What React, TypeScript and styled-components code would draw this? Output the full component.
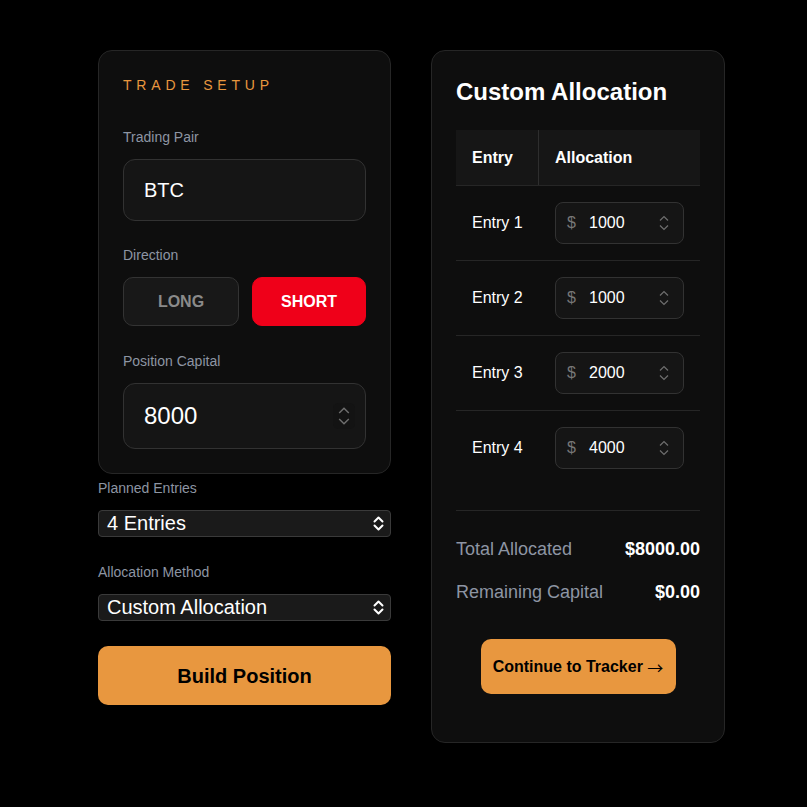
import React from 'react';
import styled, { createGlobalStyle } from 'styled-components';

const GlobalStyle = createGlobalStyle`
  body {
    margin: 0;
    background: #000;
    font-family: "Liberation Sans", Arial, sans-serif;
  }
`;

const ORANGE = '#e8973f';
const LABEL = '#8d95a3';

const Page = styled.div`
  display: flex;
  align-items: flex-start;
  gap: 40px;
  padding: 50px 0 0 98px;
`;

const LeftColumn = styled.div`
  width: 293px;
  display: flex;
  flex-direction: column;
`;

const Card = styled.div`
  background: #0e0e0e;
  border: 1px solid #262626;
  border-radius: 14px;
  padding: 24px;
`;

const RightCard = styled(Card)`
  width: 294px;
  box-sizing: border-box;
  display: flex;
  flex-direction: column;
  padding: 27px 24px 48px;
`;

const SectionTitle = styled.div`
  color: ${ORANGE};
  font-size: 14px;
  line-height: 20px;
  letter-spacing: 4.8px;
`;

const Label = styled.div<{ $mt: number }>`
  margin-top: ${(p) => p.$mt}px;
  margin-bottom: 14px;
  color: ${LABEL};
  font-size: 14px;
  line-height: 16px;
`;

const TextBox = styled.div<{ $h: number; $size: number }>`
  height: ${(p) => p.$h}px;
  box-sizing: border-box;
  display: flex;
  align-items: center;
  justify-content: space-between;
  padding: 0 20px;
  background: #151515;
  border: 1px solid #323232;
  border-radius: 12px;
  color: #fff;
  font-size: ${(p) => p.$size}px;
`;

const DirectionRow = styled.div`
  display: grid;
  grid-template-columns: 116px 114px;
  gap: 13px;
`;

const DirButton = styled.div<{ $active?: boolean }>`
  height: 49px;
  box-sizing: border-box;
  display: flex;
  align-items: center;
  justify-content: center;
  border-radius: 10px;
  font-size: 16px;
  font-weight: 700;
  background: ${(p) => (p.$active ? '#ef0019' : '#181818')};
  border: 1px solid ${(p) => (p.$active ? '#ef0019' : '#333')};
  color: ${(p) => (p.$active ? '#fff' : '#8a8a8a')};
`;

const SpinBox = styled.div`
  width: 22px;
  height: 26px;
  border-radius: 5px;
  background: #131313;
  display: flex;
  align-items: center;
  justify-content: center;
  margin-right: -10px;
`;

const Select = styled.div`
  height: 27px;
  box-sizing: border-box;
  display: flex;
  align-items: center;
  justify-content: space-between;
  padding: 0 6px 0 8px;
  background: #1a1a1a;
  border: 1px solid #3a3a3a;
  border-radius: 4px;
  color: #fff;
  font-size: 20px;
`;

const PrimaryButton = styled.div<{ $mt: number }>`
  margin-top: ${(p) => p.$mt}px;
  display: flex;
  align-items: center;
  justify-content: center;
  background: ${ORANGE};
  border-radius: 10px;
  color: #000;
  font-weight: 700;
`;

const BuildButton = styled(PrimaryButton)`
  height: 59px;
  font-size: 20px;
  padding-top: 2px;
  box-sizing: border-box;
`;

const ContinueButton = styled(PrimaryButton)`
  align-self: center;
  width: 195px;
  height: 55px;
  font-size: 16px;
  white-space: pre;
`;

const Arrow = styled.span`
  font-family: "Noto Sans CJK SC", sans-serif;
  font-weight: 400;
  line-height: 1;
`;

const Heading = styled.h2`
  margin: 0;
  color: #fff;
  font-size: 24px;
  line-height: 28px;
  font-weight: 700;
`;

const Table = styled.div`
  margin-top: 24px;
`;

const Row = styled.div<{ $head?: boolean; $last?: boolean }>`
  display: grid;
  grid-template-columns: 83px 1fr;
  height: ${(p) => (p.$head ? 56 : 75)}px;
  box-sizing: border-box;
  background: ${(p) => (p.$head ? '#161616' : 'transparent')};
  border-bottom: 1px solid ${(p) => (p.$last ? 'transparent' : '#262626')};
`;

const Cell = styled.div<{ $head?: boolean; $divider?: boolean }>`
  display: flex;
  align-items: center;
  padding-left: 16px;
  color: #fff;
  font-size: 16px;
  font-weight: ${(p) => (p.$head ? 700 : 400)};
  border-right: 1px solid ${(p) => (p.$divider ? '#2e2e2e' : 'transparent')};
`;

const AmountBox = styled.div`
  width: 129px;
  height: 42px;
  box-sizing: border-box;
  display: flex;
  align-items: center;
  padding: 0 14px 0 11px;
  background: #151515;
  border: 1px solid #323232;
  border-radius: 8px;
  font-size: 16px;
`;

const Dollar = styled.span`
  color: #777;
  width: 22px;
`;

const Amount = styled.span`
  flex: 1;
  color: #fff;
`;

const Summary = styled.div`
  margin-top: 24px;
  padding-top: 28px;
  border-top: 1px solid #262626;
  display: flex;
  flex-direction: column;
  gap: 23px;
`;

const SummaryRow = styled.div`
  display: flex;
  justify-content: space-between;
  font-size: 18px;
  line-height: 20px;
`;

const SummaryLabel = styled.span`
  color: ${LABEL};
`;

const SummaryValue = styled.span`
  color: #fff;
  font-weight: 700;
`;

const Spinner = ({ w, h }: { w: number; h: number }) => (
  <svg width={w} height={h} viewBox="0 0 10 16" fill="none" stroke="#6e6e6e" strokeWidth="1.2">
    <path d="M1 5.5 L5 1.5 L9 5.5" />
    <path d="M1 10.5 L5 14.5 L9 10.5" />
  </svg>
);

const SelectChevron = () => (
  <svg width="11" height="15" viewBox="0 0 11 15" fill="none" stroke="#fff" strokeWidth="2" strokeLinecap="round" strokeLinejoin="round">
    <path d="M1.5 5.5 L5.5 1.5 L9.5 5.5" />
    <path d="M1.5 9.5 L5.5 13.5 L9.5 9.5" />
  </svg>
);

const entries = [
  { name: 'Entry 1', value: '1000' },
  { name: 'Entry 2', value: '1000' },
  { name: 'Entry 3', value: '2000' },
  { name: 'Entry 4', value: '4000' },
];

export default function App() {
  return (
    <>
      <GlobalStyle />
      <Page>
        <LeftColumn>
          <Card>
            <SectionTitle>TRADE SETUP</SectionTitle>
            <Label $mt={34}>Trading Pair</Label>
            <TextBox $h={62} $size={20}>BTC</TextBox>
            <Label $mt={26}>Direction</Label>
            <DirectionRow>
              <DirButton>LONG</DirButton>
              <DirButton $active>SHORT</DirButton>
            </DirectionRow>
            <Label $mt={27}>Position Capital</Label>
            <TextBox $h={66} $size={24}>
              <span>8000</span>
              <SpinBox>
                <Spinner w={12} h={24} />
              </SpinBox>
            </TextBox>
          </Card>
          <Label $mt={6}>Planned Entries</Label>
          <Select>
            <span>4 Entries</span>
            <SelectChevron />
          </Select>
          <Label $mt={27}>Allocation Method</Label>
          <Select>
            <span>Custom Allocation</span>
            <SelectChevron />
          </Select>
          <BuildButton $mt={25}>Build Position</BuildButton>
        </LeftColumn>

        <RightCard>
          <Heading>Custom Allocation</Heading>
          <Table>
            <Row $head>
              <Cell $head $divider>Entry</Cell>
              <Cell $head>Allocation</Cell>
            </Row>
            {entries.map((e, i) => (
              <Row key={e.name} $last={i === entries.length - 1}>
                <Cell>{e.name}</Cell>
                <Cell>
                  <AmountBox>
                    <Dollar>$</Dollar>
                    <Amount>{e.value}</Amount>
                    <Spinner w={10} h={16} />
                  </AmountBox>
                </Cell>
              </Row>
            ))}
          </Table>
          <Summary>
            <SummaryRow>
              <SummaryLabel>Total Allocated</SummaryLabel>
              <SummaryValue>$8000.00</SummaryValue>
            </SummaryRow>
            <SummaryRow>
              <SummaryLabel>Remaining Capital</SummaryLabel>
              <SummaryValue>$0.00</SummaryValue>
            </SummaryRow>
          </Summary>
          <ContinueButton $mt={37}>
            Continue to Tracker <Arrow>→</Arrow>
          </ContinueButton>
        </RightCard>
      </Page>
    </>
  );
}
